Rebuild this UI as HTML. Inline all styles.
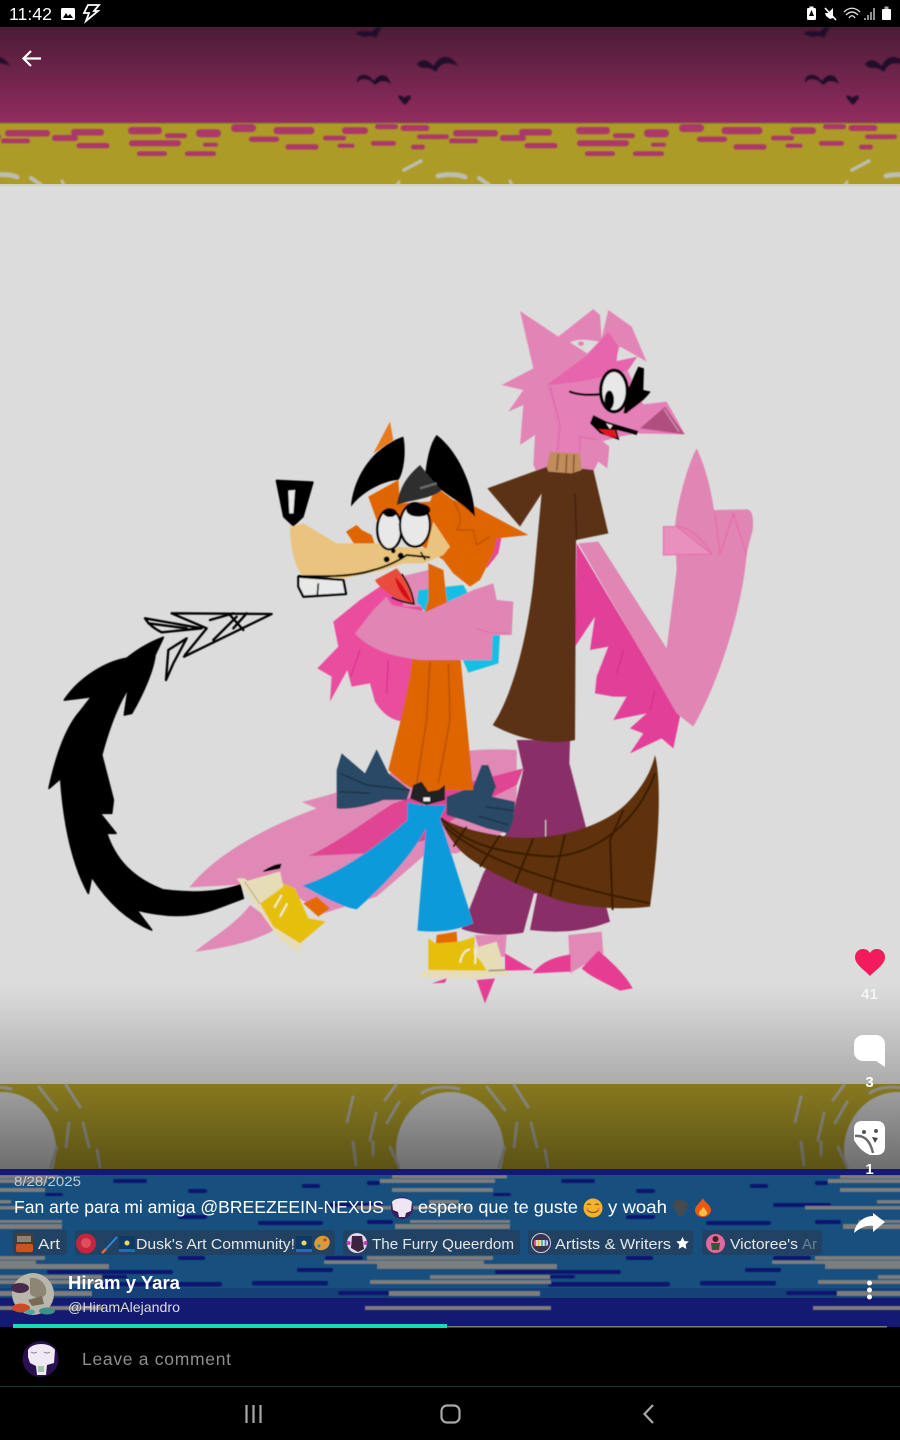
<!DOCTYPE html>
<html lang="en"><head><meta charset="utf-8"><title>Post</title>
<style>
html,body{margin:0;padding:0;background:#000;width:900px;height:1440px;overflow:hidden}
svg{display:block;position:absolute;left:0;top:0}
text{font-family:"Liberation Sans","DejaVu Sans",sans-serif}
</style></head><body>
<svg width="900" height="1440" viewBox="0 0 900 1440" xmlns="http://www.w3.org/2000/svg">
<defs>
<linearGradient id="sky" x1="0" y1="0" x2="0" y2="1"><stop offset="0" stop-color="#4a1c36"/><stop offset="1" stop-color="#932c60"/></linearGradient>
<linearGradient id="ov" x1="0" y1="0" x2="0" y2="1"><stop offset="0" stop-color="#000" stop-opacity="0"/><stop offset=".54" stop-color="#000" stop-opacity=".22"/><stop offset="1" stop-color="#000" stop-opacity=".47"/></linearGradient>
<filter id="soft" x="-5%" y="-5%" width="110%" height="110%"><feGaussianBlur stdDeviation=".45"/></filter>
<filter id="soft2" x="-5%" y="-5%" width="110%" height="110%"><feGaussianBlur stdDeviation=".7"/></filter>
<clipPath id="topclip"><rect x="0" y="27" width="900" height="157"/></clipPath>
<clipPath id="midclip"><rect x="0" y="1084" width="900" height="85"/></clipPath>
<clipPath id="lowclip"><rect x="0" y="1175" width="900" height="152"/></clipPath>
<g id="topTile">
<g fill="#24102a">
<path d="M356 33C360 30 366 31 371 32C374 30 376 28 377 27L382 27C379 31 378 34 376 38C372 35 369 36 365 37C362 36 358 36 356 33Z"/>
<path d="M417 64C420 60 425 59 429 62L434 66C436 60 442 56 447 57C452 58 456 62 458 66C452 63 446 62 441 65C439 67 437 69 436 72C433 69 428 67 424 68C421 68 418 66 417 64Z"/>
<path d="M357 80C358 75 365 73 370 77L374 81C377 76 383 73 387 77C389 79 390 82 391 84C387 81 382 80 379 82L375 85C372 81 368 79 364 79C361 79 359 80 357 83Z"/>
<path d="M398 96C401 95 403 96 404 98C406 96 409 95 411 96C411 99 408 102 405 105C402 102 399 99 398 96Z"/>
</g>
<g fill="#ab3868">
<rect x="5" y="130" width="45" height="6.5" rx="3.2"/><rect x="71" y="129" width="33" height="6.5" rx="3.2"/><rect x="52" y="135" width="26" height="6" rx="3"/><rect x="1" y="138.5" width="29" height="4.8" rx="2.4"/><rect x="128" y="127" width="34" height="7.3" rx="3.6"/><rect x="165" y="133.3" width="22" height="4.8" rx="2.4"/><rect x="196" y="129.3" width="25" height="8" rx="4"/><rect x="231" y="124" width="25" height="8" rx="4"/><rect x="273.5" y="127" width="41" height="7.3" rx="3.6"/><rect x="342" y="127.3" width="26" height="6.7" rx="3.3"/><rect x="375" y="124" width="23" height="5.3" rx="2.6"/><rect x="400.5" y="125" width="29" height="6" rx="3"/><rect x="249" y="136.6" width="30" height="5.3" rx="2.6"/><rect x="323" y="135.7" width="23" height="4.7" rx="2.3"/><rect x="417" y="134.4" width="32" height="4.7" rx="2.3"/><rect x="285.5" y="144.3" width="33" height="5.3" rx="2.6"/><rect x="337.5" y="143.7" width="17" height="4" rx="2"/><rect x="371" y="141" width="25" height="4.7" rx="2.3"/><rect x="411" y="144.7" width="14" height="4.7" rx="2.3"/><rect x="76.5" y="143" width="33" height="5.3" rx="2.6"/><rect x="129" y="140.3" width="52" height="6" rx="3"/><rect x="203" y="142.7" width="15" height="4" rx="2"/><rect x="137" y="151.3" width="30" height="4.7" rx="2.3"/><rect x="185" y="151.3" width="31" height="4.7" rx="2.3"/>
</g>
<g fill="none" stroke="#bdbdb4" stroke-linecap="round">
<path d="M421 161L404 170" stroke-width="3.5"/><path d="M438 176C445 174 458 174 465 177" stroke-width="5"/><path d="M479 178L489 185" stroke-width="4"/><path d="M510 181L512 185" stroke-width="3"/><path d="M399 182L397 185" stroke-width="3"/>
</g>
</g>
<g id="midTile">
<ellipse cx="450" cy="1150" rx="54" ry="58" fill="#cfcfcf"/>
<g fill="none" stroke="#b4b4aa" stroke-width="3" stroke-linecap="round">
<path d="M353 1097L347 1122M487 1087L505 1110M514 1085L528 1107M422 1093C432 1086 448 1086 459 1089M399 1102L387 1123M376 1113L370 1140M373 1142L373 1155M390 1147L399 1167M353 1142L356 1165M517 1123L514 1147M531 1123L537 1147M505 1147L499 1167M545 1150L548 1167M396 1085L385 1100"/>
</g>
</g>
<g id="lowTile">
<g fill="#10196e">
<rect x="113" y="1179" width="34" height="4" rx="2"/><rect x="188" y="1189" width="19" height="4" rx="2"/><rect x="302" y="1184" width="18" height="4" rx="2"/><rect x="367" y="1181" width="13" height="4" rx="2"/><rect x="45" y="1193" width="18" height="3" rx="1.5"/><rect x="178" y="1215" width="29" height="4" rx="2"/><rect x="258" y="1221" width="65" height="4" rx="2"/><rect x="325" y="1203" width="58" height="4" rx="2"/><rect x="367" y="1220" width="26" height="4" rx="2"/><rect x="178" y="1256" width="27" height="4" rx="2"/><rect x="325" y="1256" width="38" height="4" rx="2"/><rect x="297" y="1268" width="36" height="4" rx="2"/><rect x="47" y="1270" width="126" height="4" rx="2"/><rect x="100" y="1282" width="122" height="4.5" rx="2"/><rect x="252" y="1281" width="76" height="4.5" rx="2"/><rect x="338" y="1291" width="55" height="4" rx="2"/><rect x="53" y="1275" width="74" height="3.5" rx="1.7"/>
</g>
</g>
<g id="streaks" fill="#7d7d7d">
<rect x="392" y="1175" width="115" height="3.5"/><rect x="380" y="1179" width="115" height="4"/><rect x="392" y="1188" width="101" height="4"/><rect x="429" y="1200" width="30" height="3.5"/><rect x="357" y="1206" width="115" height="3.5"/><rect x="410" y="1220" width="100" height="3"/><rect x="395" y="1224" width="115" height="5"/><rect x="367" y="1256" width="126" height="4"/><rect x="324" y="1260.5" width="160" height="3.5"/><rect x="377" y="1264" width="180" height="5"/><rect x="430" y="1275" width="120" height="4"/><rect x="370" y="1280" width="181" height="4"/><rect x="389" y="1291" width="151" height="5"/><rect x="365" y="1306" width="186" height="4"/>
</g>
</defs>

<rect width="900" height="1440" fill="#000"/>

<!-- top image band -->
<rect y="27" width="900" height="96" fill="url(#sky)"/>
<rect y="123" width="900" height="61" fill="#ad9b28"/>
<rect y="122.5" width="900" height="1.5" fill="#8f7a32"/>
<g clip-path="url(#topclip)"><g filter="url(#soft2)"><use href="#topTile"/><use href="#topTile" x="448"/><use href="#topTile" x="-448"/></g></g>

<!-- drawing background -->
<rect y="184" width="900" height="900" fill="#dcdcdc"/>
<rect y="184" width="900" height="2" fill="#d2d2c4"/>

<!-- lower image bands -->
<rect y="1084" width="900" height="85" fill="#ad9b28"/>
<g clip-path="url(#midclip)"><g filter="url(#soft)"><use href="#midTile"/><use href="#midTile" x="448"/><use href="#midTile" x="-448"/></g></g>
<rect y="985" width="900" height="184" fill="url(#ov)"/>
<rect y="1083" width="900" height="1" fill="#b3ad8a"/>

<rect y="1169" width="900" height="158" fill="#141a72"/>
<rect y="1175" width="900" height="119" fill="#174f7e"/>
<rect y="1288" width="900" height="10" fill="#164078"/>
<g clip-path="url(#lowclip)"><g filter="url(#soft)">
<use href="#lowTile"/><use href="#lowTile" x="448"/>
<use href="#streaks" x="-448"/><use href="#streaks"/><use href="#streaks" x="448"/>
</g></g>

<g filter="url(#soft)">
<!-- back feathers, pants, tail, legs -->
<g transform="translate(180 740) scale(.33333)">
<path fill="#e189b6" d="M28 442C110 340 260 260 410 205L366 186C470 160 560 130 700 70C780 40 880 22 1010 30L1010 260L830 340L740 340L590 470L430 520L350 470L260 420L165 435Z"/>
<path fill="#e189b6" d="M45 635C100 590 170 550 210 495L300 560C240 600 140 625 45 635Z"/>
<path fill="#df4593" d="M385 348C470 310 560 240 640 190C760 150 900 120 1030 85L1010 135L930 175L800 250L740 300L560 340Z"/>
<path fill="#e189b6" d="M885 585L980 585L975 650L905 655ZM1165 585L1265 575L1270 640L1170 700Z"/>
<path fill="#e63e92" d="M1058 700C1090 660 1130 650 1172 643L1172 695ZM1205 685L1255 632C1300 670 1340 710 1358 745L1320 752C1280 730 1230 710 1205 685ZM975 640L1060 690L975 692ZM890 720L945 715L915 790ZM755 730L800 715L795 728Z"/>
<path fill="#8a2e68" d="M1010 0L1170 0L1168 70L1220 270L1290 545C1200 580 1120 578 1050 570L1072 460L1062 460L1030 578C960 590 900 585 845 567L910 400L990 260L1030 90Z"/>
<path stroke="#dcdcdc" stroke-width="3" d="M1097 240L1097 290"/>
<path fill="#5f3208" d="M780 232C830 260 900 280 1000 292C1130 300 1270 260 1340 190C1390 140 1415 90 1425 45C1440 100 1445 250 1410 500C1330 510 1200 505 1120 475C1020 440 880 380 830 320C810 295 790 265 780 232Z"/>
<g fill="none" stroke="#3a1a04" stroke-width="6">
<path d="M785 235C850 310 950 340 1120 350C1250 340 1370 250 1425 100M795 260C880 340 1060 420 1410 490M860 260L820 320M960 285L900 380M1060 295L1005 430M1155 285L1110 470M1330 210L1290 300L1298 510"/>
</g>
<!-- bow -->
<path fill="#2b4a66" d="M470 205L470 90L485 40L555 100L590 28L625 100L690 150L680 180L610 180C560 200 500 210 470 205Z"/>
<path fill="#2b4a66" d="M800 170L880 140L905 75L925 75L948 140L935 170L1005 185L1000 240L985 280L920 265L850 240L800 225Z"/>
<g fill="none" stroke="#1d354c" stroke-width="5"><path d="M480 100L560 135L690 150M478 155L570 160M915 200L1000 212M895 228L985 255"/></g>
<!-- orange feet -->
<path fill="#e36a00" d="M370 490L410 470L450 505L415 530ZM770 585L830 575L832 610L768 612Z"/>
<!-- blue pants -->
<path fill="#0f9adb" d="M682 185C720 200 770 195 800 195L780 235L880 550C820 575 760 578 712 572L738 265C700 340 620 430 530 508C480 500 420 465 367 437C480 400 590 320 682 240Z"/>
<!-- shoes -->
<path fill="#e6dcb8" d="M170 415L195 415L365 610L360 640L300 600Z"/>
<path fill="#e6bf0c" d="M240 490L310 430L345 445L385 535L437 545L360 610L280 560Z"/>
<path fill="#e6dcb8" d="M195 425L300 395L310 440L240 490Z"/>
<path stroke="#8d8a78" stroke-width="4" fill="none" d="M195 425L240 490"/>
<path stroke="#f2ecc8" stroke-width="6" fill="none" d="M283 503L305 465M300 530L322 490"/>
<path fill="#e6dcb8" d="M715 700L750 690L975 690L990 705L880 715L730 712Z"/>
<path fill="#e6bf0c" d="M745 595L765 610L840 605L885 590L880 640L930 692L745 690Z"/>
<path fill="#e6dcb8" d="M880 625L950 605L975 690L920 692Z"/>
<path stroke="#f2ecc8" stroke-width="6" fill="none" d="M840 668C845 645 855 630 870 628M885 672L888 628"/>
<path stroke="#9a9684" stroke-width="5" d="M925 692L975 690"/>
</g>

<!-- pink character head -->
<g transform="translate(500 305) scale(.33333)">
<path fill="#e285b6" d="M60 18L175 95L280 12L300 30L305 100L325 15L395 65L440 170L360 125L340 180L300 300L310 410L328 425L322 490L295 470L280 500L110 500L100 480L105 390L60 420L70 300L25 320L70 255L5 240L100 190Z"/>
<path fill="#dcdcdc" d="M210 112C235 100 270 105 297 110L262 145Z"/>
<ellipse cx="243" cy="116" rx="9" ry="7" fill="#e285b6"/>
<path fill="#dcdcdc" d="M358 127L412 155L350 168Z"/>
<path fill="#e47fb8" d="M140 240L170 370L170 445L240 450L240 395L310 408L360 395L410 385L555 388L500 290L430 298L380 190L310 215L165 238Z"/>
<path fill="#e665ad" d="M140 240L262 150L325 80L355 125L350 168L412 155L385 195L310 215L240 230L165 238Z"/>
<path fill="none" stroke="#e468aa" stroke-width="4" d="M150 245L180 360L172 440M240 440L240 395L290 405"/>
<path fill="#b0507f" d="M420 370L495 305L553 388Z"/>
<path stroke="#cc85a8" stroke-width="5" d="M492 312L537 380"/>
<path fill="#000" d="M385 250L415 185L432 190L430 255L452 260C430 290 410 300 380 325L370 325Z"/>
<ellipse cx="342" cy="258" rx="40" ry="62" fill="#e8e8e8" stroke="#000" stroke-width="10"/>
<ellipse cx="328" cy="285" rx="14" ry="28" fill="#000"/>
<path fill="none" stroke="#000" stroke-width="7" stroke-linecap="round" d="M210 260C240 272 275 270 300 268"/>
<path fill="#000" d="M270 355L280 330L320 350L415 378L410 390L350 375L358 405L300 385Z"/>
<path fill="#e0141c" d="M295 372L345 375L352 398L320 392Z"/>
<path fill="#e8e8e8" d="M318 355L338 361L330 372Z"/>
</g>

<!-- pink character body -->
<g transform="translate(480 300) scale(.33333)">
<path fill="#e23f98" d="M290 730L600 1250L580 1345L545 1315L450 1360L490 1300L450 1285L500 1240L400 1260L440 1190L400 1190L345 1180L350 1130L385 1040L330 1050L345 950L285 1040Z"/>
<path fill="none" stroke="#d92f8a" stroke-width="4" d="M430 1050L410 1120M525 1170L510 1230"/>
<path fill="#e085b4" d="M295 730L355 725L560 1045L590 810L585 680C590 620 620 500 650 445C680 510 695 580 702 630L800 628C815 628 822 650 818 690L800 760C790 900 730 1120 640 1280L590 1240Z"/>
<path fill="#e890be" stroke="#e96cac" stroke-width="3" d="M550 680L590 680L695 762L550 765Z"/>
<path fill="none" stroke="#e96cac" stroke-width="4" d="M705 640L720 765L760 640L800 765M590 680C630 680 670 720 695 762"/>
<!-- brown top -->
<path fill="#5b3313" d="M22 565L215 495L340 510L385 700L288 720L285 1320C200 1340 100 1310 38 1275C70 1230 130 1100 160 850L185 580L120 680Z"/>
<path stroke="#3e210a" stroke-width="4" d="M285 580L290 720"/>
<path fill="#c08c5c" d="M210 456L300 460L305 510L275 520L205 515L200 500Z"/>
<path stroke="#8a5c36" stroke-width="5" d="M235 462L230 512M260 464L258 518M282 464L280 518"/>
</g>

<!-- fox -->
<g transform="translate(260 420) scale(.33333)">
<path fill="#ea4e9e" d="M220 605L300 540L360 500L470 470L500 500L450 800L440 905C400 905 370 885 345 845L330 790L275 800L262 750L210 845L215 770L172 745L235 680Z"/>
<path fill="none" stroke="#df2f8c" stroke-width="4" d="M300 690L272 770M385 720L380 820"/>
<path fill="#e189b6" d="M420 470L505 450L505 560L430 560Z"/>
<path fill="#e64a9a" d="M680 340L725 350L715 400L680 445Z"/>
<path fill="#13bde4" d="M470 545L475 510L510 505L610 495L640 550L720 640L715 730L625 758L600 700Z"/>
<path fill="#df6500" d="M505 430L550 450L560 540L600 700L640 1110L560 1110L500 1130L430 1090L385 1050C410 950 450 800 460 690L505 540Z"/>
<path fill="none" stroke="#bd5200" stroke-width="5" d="M510 725L500 900L470 1090M565 730L570 900L535 1090"/>
<path fill="#e085b4" d="M395 555L500 575L640 510L700 490L710 540L760 545L755 645L698 645L695 720L480 720C400 710 330 690 285 640L340 570L380 530Z"/>
<path fill="none" stroke="#e56ba8" stroke-width="3" d="M650 625C680 640 710 640 745 640"/>
<path fill="#e87a1a" d="M390 5L400 60L340 100Z"/>
<path fill="#df6500" d="M325 230L415 180L420 250L510 245L520 220L540 210L580 240L645 260L805 345L710 355L700 400L660 480L630 500L580 460L550 420L505 390L350 300Z"/>
<path fill="#df6500" d="M258 335L290 315L305 330L335 345L345 375L285 375Z"/>
<path fill="none" stroke="#bd5200" stroke-width="4" d="M582 245C600 280 610 300 590 330L640 330L650 375L690 350"/>
<path fill="#eac47e" d="M90 320L130 310L230 370L350 370L400 380L500 385L520 305L570 380L550 405L490 430L430 430L370 450L250 475L125 465C100 430 90 370 90 320Z"/>
<path fill="#e8e8e8" stroke="#000" stroke-width="7" stroke-linejoin="round" d="M115 470L250 480L258 522L130 530L115 500Z"/>
<path stroke="#000" stroke-width="5" d="M175 490L172 526"/>
<path fill="none" stroke="#000" stroke-width="6" d="M115 468C200 470 280 470 340 450C380 440 420 420 440 405L510 412"/>
<path fill="#000" stroke="#000" stroke-width="6" stroke-linejoin="round" d="M50 182L158 187L128 290L100 316L72 290Z"/>
<path fill="#e8e8e8" d="M85 212L105 210L100 280L88 280Z"/>
<path fill="#000" d="M273 260C280 170 340 80 430 50C440 100 430 160 415 180C380 180 310 210 273 260Z"/>
<path fill="#000" d="M530 45C590 90 640 190 645 290C600 240 560 230 495 170C500 120 510 70 530 45Z"/>
<path fill="#2d2d2d" d="M410 255C420 200 440 170 480 135C500 160 530 195 545 210C520 235 450 240 410 255Z"/>
<path stroke="#6a6a6a" stroke-width="7" d="M480 205L530 190"/>
<ellipse cx="388" cy="328" rx="36" ry="60" fill="#e8e8e8" stroke="#000" stroke-width="7"/>
<ellipse cx="465" cy="315" rx="45" ry="65" fill="#e8e8e8" stroke="#000" stroke-width="7"/>
<ellipse cx="475" cy="270" rx="36" ry="20" fill="#000"/><ellipse cx="390" cy="278" rx="20" ry="13" fill="#000"/>
<circle cx="380" cy="418" r="9" fill="#000"/><circle cx="400" cy="393" r="7" fill="#000"/><circle cx="422" cy="407" r="9" fill="#000"/>
<path fill="none" stroke="#000" stroke-width="5" d="M482 396L496 420"/>
<path fill="#e94b3c" d="M345 480L410 445C440 480 455 510 462 552C420 545 360 510 345 480Z"/>
<path fill="#d60d18" d="M405 470C430 495 445 525 455 548C425 530 410 500 405 470Z"/>
<path fill="none" stroke="#000" stroke-width="5" d="M425 462C445 490 458 520 462 552C440 548 420 545 395 532"/>
</g>
<!-- belt, drawn over torso -->
<g transform="translate(180 740) scale(.33333)">
<path fill="#222" d="M690 175L700 135L725 125L745 155L775 150L795 135L795 180L740 195Z"/>
<rect x="730" y="172" width="20" height="12" fill="#eee"/>
</g>

<!-- black tail -->
<g transform="translate(30 600) scale(.33333)">
<path fill="#000" stroke="#000" stroke-width="5" stroke-linejoin="round" d="M400 112C340 135 310 160 290 175C230 185 150 230 103 300L185 290L150 335C110 380 80 460 57 565L92 535C100 650 120 780 175 880L185 830C230 900 290 960 365 990L320 930C400 950 480 955 560 925L640 895L630 855C560 880 480 880 400 870C320 840 260 790 230 700L258 700L210 640L245 640L250 600L215 465C235 390 260 320 295 265L283 345L305 340C340 280 370 210 375 165Z"/>
<path fill="none" stroke="#000" stroke-width="7" stroke-linejoin="round" stroke-linecap="round" d="M425 40L725 42L462 170M345 55L515 85L395 97Q360 80 345 55M425 40L530 85L465 165M355 70L470 85M540 60L610 40M600 45L640 90M610 85L650 40M550 120L620 50M408 240L415 150L470 115L430 190Z"/>
</g>
<g transform="translate(180 740) scale(.33333)">
<path fill="#e6dcb8" d="M195 425L300 395L310 440L240 490Z"/>
<path fill="#000" d="M250 392C270 380 290 370 305 372L300 386L250 396Z"/>
</g>
</g>

<!-- status bar -->
<text x="9" y="20" font-size="17.5" textLength="43" lengthAdjust="spacingAndGlyphs" fill="#fff">11:42</text>
<rect x="61" y="8" width="14" height="12" rx="1.5" fill="#fff"/><path d="M63 18L66 13L68 16L70 14L73 18Z" fill="#000"/>
<path d="M88 5H99L94 11H98L86 21L89 13H84Z" fill="none" stroke="#fff" stroke-width="1.8"/>
<rect x="807" y="8" width="9" height="12" rx="1.5" fill="#fff"/><rect x="809.5" y="6.5" width="4" height="2" fill="#fff"/><path d="M811.5 10L809 16H814Z" fill="#000"/>
<path d="M825 8L836 20" stroke="#fff" stroke-width="1.6"/><path d="M825 13H828L833 8V18L830 19L826 16Z" fill="#fff"/>
<path d="M844 12C849 7 855 7 860 12M846 15C850 11 854 11 858 15M849 18C851 15 853 15 855 18" fill="none" stroke="#ddd" stroke-width="1.3"/>
<path d="M865 18v2M868 15v5M871 12v8M874 8v12" stroke="#ccc" stroke-width="1.4"/>
<rect x="882" y="9" width="9" height="11" rx="1" fill="#fff"/><rect x="884.5" y="6.5" width="4" height="2.5" fill="#aaa"/>

<!-- back arrow -->
<path d="M41 58.5H24M31 51L23.5 58.5L31 66" fill="none" stroke="#fff" stroke-width="2.2"/>

<!-- side actions -->
<path d="M870 976C862 968 855 964 855 957C855 952 859 949 863 949C866 949 868 950 870 953C872 950 874 949 877 949C881 949 885 952 885 957C885 964 878 968 870 976Z" fill="#f21c5d"/>
<text x="869.5" y="999" font-size="15" font-weight="bold" text-anchor="middle" fill="#f4f4f4">41</text>
<path d="M863 1035H876C881 1035 885 1039 885 1044V1067L876 1061H863C858 1061 854 1057 854 1052V1044C854 1039 858 1035 863 1035Z" fill="#fff"/>
<text x="869.5" y="1087" font-size="15" font-weight="bold" text-anchor="middle" fill="#fff">3</text>
<path d="M862 1121H877C882 1121 885 1124 885 1129V1147C885 1152 882 1155 877 1155H870C863 1152 858 1147 854 1140V1129C854 1124 857 1121 862 1121Z" fill="#fff"/>
<circle cx="864" cy="1132" r="2" fill="#555"/><circle cx="876" cy="1131" r="2" fill="#555"/>
<path d="M855 1136C864 1135 870 1140 873 1153" fill="none" stroke="#6a6a6a" stroke-width="2.5"/><path d="M872 1137L878 1138L875 1143Z" fill="#444"/>
<text x="869.5" y="1174" font-size="15" font-weight="bold" text-anchor="middle" fill="#fff">1</text>
<path d="M854 1233C855 1224 863 1216 873 1216V1213L885 1222L873 1232V1226C866 1225 860 1228 854 1233Z" fill="#fff"/>
<circle cx="869.5" cy="1283" r="2.5" fill="#fff"/><circle cx="869.5" cy="1290" r="2.5" fill="#fff"/><circle cx="869.5" cy="1297" r="2.5" fill="#fff"/>

<!-- caption -->
<text x="14" y="1186" font-size="14" fill="#c9c9c9" textLength="67" lengthAdjust="spacingAndGlyphs">8/28/2025</text>
<text x="14" y="1213" font-size="17.5" fill="#fff" textLength="370" lengthAdjust="spacingAndGlyphs">Fan arte para mi amiga @BREEZEEIN-NEXUS</text>
<circle cx="402" cy="1208" r="11" fill="#3a1b5c"/><path d="M392 1202C395 1197 408 1197 412 1202L411 1211L406 1213L405 1217H399L398 1212L393 1210Z" fill="#efe6f2"/>
<text x="418" y="1213" font-size="17.5" fill="#fff" textLength="160" lengthAdjust="spacingAndGlyphs">espero que te guste</text>
<circle cx="593" cy="1208" r="9.5" fill="#f5b32c"/><path d="M587 1205q2-2 4 0M595 1205q2-2 4 0M587 1210q6 5 12 0" fill="none" stroke="#8a5a10" stroke-width="1.2"/><circle cx="587.5" cy="1209" r="1.5" fill="#f08a5a"/><circle cx="598.5" cy="1209" r="1.5" fill="#f08a5a"/>
<text x="608" y="1213" font-size="17.5" fill="#fff" textLength="59" lengthAdjust="spacingAndGlyphs">y woah</text>
<path d="M673 1203C676 1198 686 1199 688 1205L686 1208L688 1210L684 1212L684 1216H677L677 1211C674 1210 672 1206 673 1203Z" fill="#444a4e"/>
<path d="M703 1198C704 1202 711 1205 711 1210C711 1214 707 1217 703 1217C698 1217 695 1214 695 1210C695 1206 699 1204 703 1198Z" fill="#ea5a12"/><path d="M703 1207C705 1209 707 1211 707 1213C707 1215 705 1216 703 1216C701 1216 699 1215 699 1213C699 1211 702 1210 703 1207Z" fill="#f9c23a"/>

<!-- community chips -->
<g fill="#30323e" fill-opacity=".42">
<rect x="13" y="1230" width="54" height="25" rx="3"/><rect x="75" y="1230" width="260" height="25" rx="3"/><rect x="343" y="1230" width="177" height="25" rx="3"/><rect x="528" y="1230" width="165" height="25" rx="3"/><rect x="702" y="1230" width="120" height="25" rx="3"/>
</g>
<rect x="15" y="1233" width="18" height="20" rx="3" fill="#4b3c34"/><rect x="16" y="1244" width="17" height="8" rx="2" fill="#c8541e"/><rect x="17" y="1236" width="14" height="6" fill="#8d8478"/>
<text x="38" y="1249" font-size="15" fill="#e6e6e6" textLength="22" lengthAdjust="spacingAndGlyphs">Art</text>
<circle cx="86" cy="1243.5" r="10" fill="#c8243e"/><circle cx="86" cy="1243" r="5" fill="#d9505f"/>
<path d="M117 1237L106 1249" stroke="#2e87d8" stroke-width="2"/><path d="M106 1249L102 1253" stroke="#e86a34" stroke-width="2.5"/>
<rect x="119" y="1236" width="16" height="16" fill="#0f3a66"/><circle cx="127" cy="1243" r="2.5" fill="#f2d66a"/><rect x="119" y="1249" width="16" height="3" fill="#1e6fb0"/>
<text x="136" y="1249" font-size="15" fill="#e6e6e6" textLength="159" lengthAdjust="spacingAndGlyphs">Dusk's Art Community!</text>
<rect x="296" y="1236" width="16" height="16" fill="#0f3a66"/><circle cx="304" cy="1243" r="2.5" fill="#f2d66a"/><rect x="296" y="1249" width="16" height="3" fill="#1e6fb0"/>
<ellipse cx="322" cy="1243" rx="8" ry="7" fill="#d99a3a" transform="rotate(-30 322 1243)"/><circle cx="319" cy="1246" r="1.5" fill="#2f7fd0"/><circle cx="325" cy="1240" r="1.5" fill="#c33"/>
<circle cx="357" cy="1243" r="10" fill="#e6d6ea"/><path d="M352 1236H362L364 1249L358 1252L351 1248Z" fill="#3a2440"/><circle cx="348.5" cy="1243" r="2" fill="#c23bb0"/><circle cx="365.5" cy="1243" r="2" fill="#c23bb0"/>
<text x="372" y="1249" font-size="15" fill="#e6e6e6" textLength="142" lengthAdjust="spacingAndGlyphs">The Furry Queerdom</text>
<circle cx="541" cy="1243" r="9.5" fill="#3a3450" stroke="#cfcfe0" stroke-width="1"/><rect x="534" y="1240" width="14" height="6" rx="2" fill="#d8d8e8"/><path d="M535 1240v6" stroke="#e33" stroke-width="1.5"/><path d="M538.5 1240v6" stroke="#e9c12a" stroke-width="1.5"/><path d="M542 1240v6" stroke="#2bb673" stroke-width="1.5"/><path d="M545.5 1240v6" stroke="#3a6fe0" stroke-width="1.5"/>
<text x="555" y="1249" font-size="15" fill="#e6e6e6" textLength="116" lengthAdjust="spacingAndGlyphs">Artists &amp; Writers</text>
<path d="M682.500 1237L684.400 1241L688.800 1241.500L685.600 1244.500L686.400 1249L682.500 1246.800L678.600 1249L679.400 1244.500L676.200 1241.500L680.600 1241Z" fill="#fff"/>
<circle cx="715.500" cy="1243.500" r="9.500" fill="#e667a0"/><circle cx="715.500" cy="1239" r="3" fill="#3a2418"/><path d="M711 1243H720L719 1250H712Z" fill="#2e5a3a"/>
<text x="730" y="1249" font-size="15" fill="#e6e6e6" textLength="68" lengthAdjust="spacingAndGlyphs">Victoree's</text>
<text x="802" y="1249" font-size="15" fill="#e6e6e6" fill-opacity=".38" textLength="15" lengthAdjust="spacingAndGlyphs">Ar</text>

<!-- author -->
<circle cx="33" cy="1294" r="21" fill="#b9b7ac"/>
<path d="M30 1278C38 1276 48 1284 46 1294C42 1300 34 1298 30 1294Z" fill="#8e8674"/>
<ellipse cx="20" cy="1288" rx="9" ry="5" fill="#4a2a4a"/>
<ellipse cx="21" cy="1308" rx="9" ry="4.500" fill="#cf4a24"/>
<ellipse cx="47" cy="1311" rx="8" ry="3.500" fill="#3f8f8a"/><ellipse cx="30" cy="1312" rx="5" ry="2.500" fill="#4aa7a0"/>
<path d="M28 1300L42 1296L44 1304L32 1306Z" fill="#7a6a58"/>
<text x="68" y="1289" font-size="18" font-weight="bold" fill="#fff" textLength="112" lengthAdjust="spacingAndGlyphs">Hiram y Yara</text>
<text x="68" y="1312" font-size="14" fill="#dcdcdc" textLength="112" lengthAdjust="spacingAndGlyphs">@HiramAlejandro</text>

<!-- progress -->
<rect x="14" y="1326" width="873" height="1.500" fill="#7b7b7b"/>
<rect x="13" y="1324" width="434" height="4" fill="#12e0b0"/>

<!-- comment bar -->
<circle cx="40.500" cy="1359" r="18" fill="#2a1050"/>
<path d="M28 1350C32 1342 50 1342 55 1350L54 1363L47 1365L46 1375H37L36 1366L30 1363L28 1357Z" fill="#f0e8f4"/>
<path d="M31 1352q3 2 6 0M44 1352q3 2 6 0" stroke="#888" stroke-width="1" fill="none"/>
<rect x="38" y="1366" width="6" height="6" fill="#9fc6a4"/>
<text x="82" y="1365" font-size="17.500" fill="#8e8e8e" textLength="149" lengthAdjust="spacing">Leave a comment</text>
<rect y="1386" width="900" height="1" fill="#1b3a30"/>

<!-- nav bar -->
<path d="M246.500 1405V1423M253.500 1405V1423M260.500 1405V1423" stroke="#a8a8a8" stroke-width="2.200"/>
<rect x="441.500" y="1405.500" width="18" height="17" rx="5.500" fill="none" stroke="#a8a8a8" stroke-width="2.200"/>
<path d="M653 1405L644.500 1414L653 1423" fill="none" stroke="#a8a8a8" stroke-width="2.200"/>
</svg>
</body></html>
